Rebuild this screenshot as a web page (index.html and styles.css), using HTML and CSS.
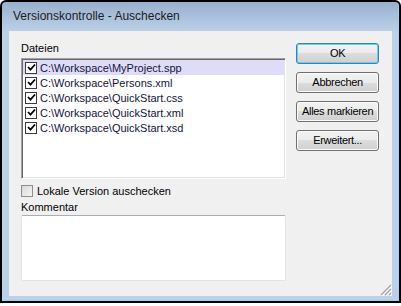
FILE: index.html
```html
<!DOCTYPE html>
<html>
<head>
<meta charset="UTF-8">
<title>Versionskontrolle - Auschecken</title>
<link rel="stylesheet" href="styles.css">
</head>
<body>

<div class="window">
	<div class="titlebar">Versionskontrolle - Auschecken</div>
	<div class="client">
		<div class="left-col">
			<div class="label">Dateien</div>
			<div class="listbox">
				<div class="item selected"><span class="check"><svg width="9" height="9" viewBox="0 0 9 9"><path d="M1 4 L3.5 6.7 L8 1.5" stroke="#000" stroke-width="1.8" fill="none"/></svg></span>C:\Workspace\MyProject.spp</div>
				<div class="item"><span class="check"><svg width="9" height="9" viewBox="0 0 9 9"><path d="M1 4 L3.5 6.7 L8 1.5" stroke="#000" stroke-width="1.8" fill="none"/></svg></span>C:\Workspace\Persons.xml</div>
				<div class="item"><span class="check"><svg width="9" height="9" viewBox="0 0 9 9"><path d="M1 4 L3.5 6.7 L8 1.5" stroke="#000" stroke-width="1.8" fill="none"/></svg></span>C:\Workspace\QuickStart.css</div>
				<div class="item"><span class="check"><svg width="9" height="9" viewBox="0 0 9 9"><path d="M1 4 L3.5 6.7 L8 1.5" stroke="#000" stroke-width="1.8" fill="none"/></svg></span>C:\Workspace\QuickStart.xml</div>
				<div class="item"><span class="check"><svg width="9" height="9" viewBox="0 0 9 9"><path d="M1 4 L3.5 6.7 L8 1.5" stroke="#000" stroke-width="1.8" fill="none"/></svg></span>C:\Workspace\QuickStart.xsd</div>
			</div>
			<div class="option"><span class="check-off"></span>Lokale Version auschecken</div>
			<div class="label comment-label">Kommentar</div>
			<div class="textbox"></div>
		</div>
		<div class="buttons">
			<div class="btn default">OK</div>
			<div class="btn">Abbrechen</div>
			<div class="btn">Alles markieren</div>
			<div class="btn">Erweitert...</div>
		</div>
		<svg class="grip" width="12" height="12" viewBox="0 0 12 12">
			<path d="M11 1 L1 11 M11 5 L5 11 M11 9 L9 11" stroke="#a2a2a2" stroke-width="1.2"/>
			<path d="M12 2 L2 12 M12 6 L6 12 M12 10 L10 12" stroke="#ffffff" stroke-width="1"/>
		</svg>
	</div>
</div>

</body>
</html>
```

FILE: styles.css
```css
/* *** Page *** */
body {
	margin: 0;
	background: #fff;
	font-family: "Liberation Sans", Arial, sans-serif;
	font-size: 11px;
	color: #000;
}

/* *** Window frame *** */
.window {
	box-sizing: border-box;
	width: 401px;
	height: 303px;
	border: 2px solid #000;
	border-radius: 6px 6px 0 0;
	background: linear-gradient(#98b0cd 0px, #a9c0db 14px, #bad0e8 29px, #bbd1ea 29px);
	box-shadow: inset -1px -1px 0 #8fd3f2;
	display: flex;
	flex-direction: column;
	padding: 0 7px 5px 7px;
}

.titlebar {
	height: 29px;
	line-height: 29px;
	padding-left: 4px;
	font-size: 12px;
	color: #1b1b1b;
}

/* *** Client area *** */
.client {
	position: relative;
	flex: 1;
	background: #f0f0f0;
	display: flex;
	gap: 10px;
	padding: 11px 13px 0 11px;
	border-left: 1px solid #e8eef6;
}

.left-col {
	width: 266px;
	display: flex;
	flex-direction: column;
}

.label {
	line-height: 13px;
	height: 13px;
}

.listbox {
	box-sizing: border-box;
	margin-top: 3px;
	height: 121px;
	background: #fff;
	border: 1px solid;
	border-color: #a0a0a0 #fff #fff #a0a0a0;
	box-shadow: inset 1px 1px 0 #696969, inset -1px -1px 0 #e3e3e3;
	padding: 1px 1px 0 1px;
}

.item {
	display: flex;
	align-items: center;
	height: 15px;
	padding-left: 2px;
	color: #14143c;
	white-space: nowrap;
}

.item.selected {
	background: #dedcf8;
}

.check {
	box-sizing: border-box;
	width: 12px;
	height: 12px;
	margin-right: 3px;
	border: 1px solid #3c3c3c;
	background: #fff;
	display: flex;
	align-items: center;
	justify-content: center;
}

.option {
	display: flex;
	align-items: center;
	height: 13px;
	margin-top: 5px;
}

.check-off {
	box-sizing: border-box;
	width: 12px;
	height: 12px;
	margin-right: 4px;
	border: 1px solid #8f8f8f;
	background: linear-gradient(135deg, #d8d8d8, #f6f6f6);
}

.comment-label {
	margin-top: 4px;
}

.textbox {
	box-sizing: border-box;
	margin-top: 1px;
	height: 66px;
	background: #fff;
	border: 1px solid #e2e3ea;
	border-top-color: #abadb3;
	border-radius: 2px;
}

/* *** Buttons *** */
.buttons {
	width: 83px;
	display: flex;
	flex-direction: column;
	gap: 8px;
	margin-top: 1px;
}

.btn {
	box-sizing: border-box;
	height: 21px;
	line-height: 19px;
	text-align: center;
	letter-spacing: -0.3px;
	border: 1px solid #707070;
	border-radius: 3px;
	background: linear-gradient(#f2f2f2 0%, #ebebeb 50%, #dddddd 50%, #cfcfcf 100%);
	box-shadow: inset 0 0 0 1px #fbfbfb;
}

.btn.default {
	border-color: #3c7fb1;
	box-shadow: inset 0 0 0 1px #5fd3f7;
}

/* Resize grip in the corner */
.grip {
	position: absolute;
	right: 0;
	bottom: 0;
}
```
